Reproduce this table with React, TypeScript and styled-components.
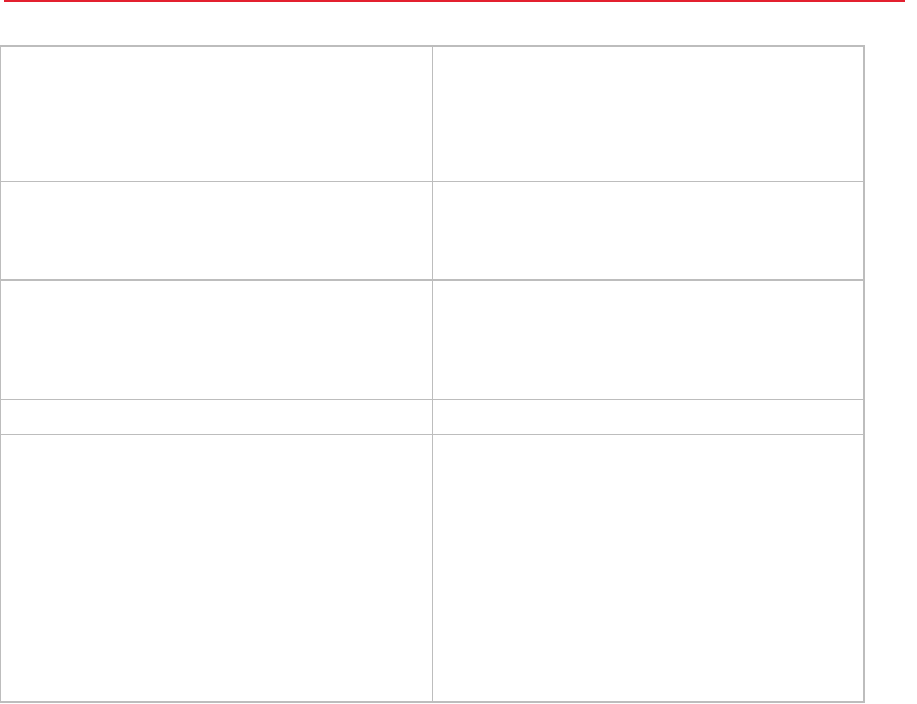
import React from "react"
import styled, { createGlobalStyle } from "styled-components"

const rows = [
  { height: 134, divider: 1 },
  { height: 97, divider: 2 },
  { height: 118, divider: 1 },
  { height: 34, divider: 1 },
  { height: 266, divider: 0 },
]

const App = () => {
  return (
    <>
      <GlobalStyle />
      <Page>
        <TopRule />
        <Grid>
          {rows.map((row, i) => (
            <Row key={i} divider={row.divider}>
              <Cell h={row.height} />
              <Cell h={row.height} />
            </Row>
          ))}
        </Grid>
      </Page>
    </>
  )
}

export default App

const GlobalStyle = createGlobalStyle`
  body {
    margin: 0;
    background: #ffffff;
    font-family: "Liberation Sans", Arial, sans-serif;
  }
`

const Page = styled.div`
  width: 917px;
  height: 704px;
  overflow: hidden;
`

const TopRule = styled.div`
  height: 2px;
  margin: 0 12px 0 4px;
  background: #e3202f;
`

const Grid = styled.div`
  margin-top: 43px;
  width: 862px;
  border-top: 2px solid #bdbdbd;
  border-right: 2px solid #bdbdbd;
  border-bottom: 2px solid #bdbdbd;
  border-left: 1px solid #bdbdbd;
  display: flex;
  flex-direction: column;
`

const Row = styled.div<{ divider: number }>`
  display: grid;
  grid-template-columns: 432px 1fr;
  border-bottom: ${(props) =>
    props.divider ? `${props.divider}px solid #bdbdbd` : "none"};
`

const Cell = styled.div<{ h: number }>`
  height: ${(props) => props.h}px;

  &:first-child {
    border-right: 1px solid #bdbdbd;
  }
`
